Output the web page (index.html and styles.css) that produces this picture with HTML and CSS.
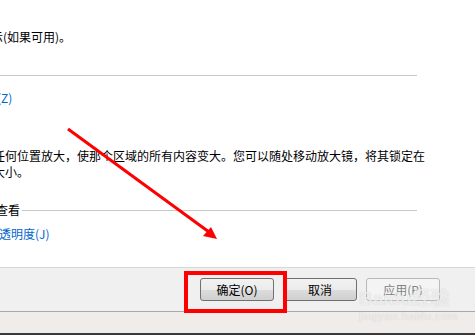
FILE: index.html
```html
<!DOCTYPE html>
<html lang="zh-CN">

<head>
    <meta charset="UTF-8">
    <title>放大镜选项</title>
    <link rel="stylesheet" href="styles.css">
</head>

<body>
    <div class="dialog">
        <div class="panel">
            <p class="line first">示(如果可用)。</p>
            <div class="rule"></div>
            <a class="link zoom-link">(Z)</a>
            <p class="line desc">任何位置放大，使那个区域的所有内容变大。您可以随处移动放大镜，将其锁定在<br>大小。</p>
            <div class="group">
                <span class="group-title">查看</span>
                <span class="group-rule"></span>
            </div>
            <a class="link alpha-link">透明度(J)</a>
        </div>

        <div class="footer">
            <button class="btn">确定(O)</button>
            <button class="btn">取消</button>
            <button class="btn" disabled>应用(P)</button>
        </div>
        <div class="strip"></div>
    </div>

    <!-- annotations on top of the screenshot -->
    <div class="mark"></div>
    <svg class="arrow" width="475" height="335" viewBox="0 0 475 335">
        <line x1="68" y1="129" x2="209" y2="232" stroke="#ff0000" stroke-width="3" />
        <polygon points="217,239 203,236 211,227" fill="#ff0000" />
    </svg>
    <div class="watermark">
        <div class="wm-logo">Baidu经验</div>
        <div class="wm-url">jingyan.baidu.com</div>
    </div>
</body>

</html>
```

FILE: styles.css
```css
body {
    margin: 0;
    width: 475px;
    height: 335px;
    overflow: hidden;
    position: relative;
    font-family: "Noto Sans CJK SC", "Microsoft YaHei", sans-serif;
    font-size: 12px;
    color: #000;
}

.dialog {
    display: flex;
    flex-direction: column;
    height: 335px;
}

.panel {
    height: 267px;
    background: #fff;
    overflow: hidden;
}

.line {
    margin: 0;
    line-height: 16px;
    white-space: nowrap;
}

.first {
    margin-top: 29px;
    margin-left: -9px;
}

.rule {
    width: 417px;
    height: 1px;
    margin-top: 30px;
    background: #c8c8c8;
}

.link {
    display: block;
    color: #0066cc;
    line-height: 16px;
    white-space: nowrap;
}

.zoom-link {
    margin-top: 14px;
    margin-left: -3px;
}

.desc {
    margin-top: 42px;
    margin-left: -7px;
}

.group {
    display: flex;
    align-items: center;
    width: 421px;
    margin-top: 22px;
    margin-left: -4px;
    line-height: 16px;
}

.group-title {
    white-space: nowrap;
    padding-right: 2px;
}

.group-rule {
    flex: 1;
    height: 1px;
    background: #c8c8c8;
}

.alpha-link {
    margin-top: 8px;
    margin-left: -1px;
}

.footer {
    display: flex;
    justify-content: flex-end;
    gap: 9px;
    height: 45px;
    padding: 10px 35px 0 0;
    box-sizing: border-box;
    background: #f0f0f0;
    border-top: 1px solid #d6d6d6;
    border-bottom: 1px solid #a9a9a9;
}

.btn {
    width: 74px;
    height: 23px;
    border: 1px solid #707070;
    border-radius: 3px;
    background: linear-gradient(#f2f2f2 0%, #ebebeb 50%, #dddddd 51%, #cfcfcf 100%);
    font-family: inherit;
    font-size: 12px;
    color: #000;
    padding: 0;
}

.btn:disabled {
    border-color: #b5b9bc;
    background: #f4f4f4;
    color: #838383;
}

.strip {
    flex: 1;
    background: #efecea;
    border-bottom: 2px solid #3a3a3a;
}

.mark {
    position: absolute;
    left: 184px;
    top: 271px;
    width: 95px;
    height: 34px;
    border: 4px solid #ff0000;
}

.arrow {
    position: absolute;
    left: 0;
    top: 0;
}

.watermark {
    position: absolute;
    left: 359px;
    top: 288px;
    color: rgba(255, 255, 255, 0.7);
    text-shadow: 0 0 1px rgba(0, 0, 0, 0.2);
}

.wm-logo {
    font-family: "Liberation Sans", "Noto Sans CJK SC", sans-serif;
    font-size: 19px;
    font-weight: bold;
    line-height: 22px;
    white-space: nowrap;
}

.wm-url {
    font-family: "Liberation Sans", sans-serif;
    font-size: 11px;
    line-height: 12px;
    letter-spacing: 0.6px;
}
```
